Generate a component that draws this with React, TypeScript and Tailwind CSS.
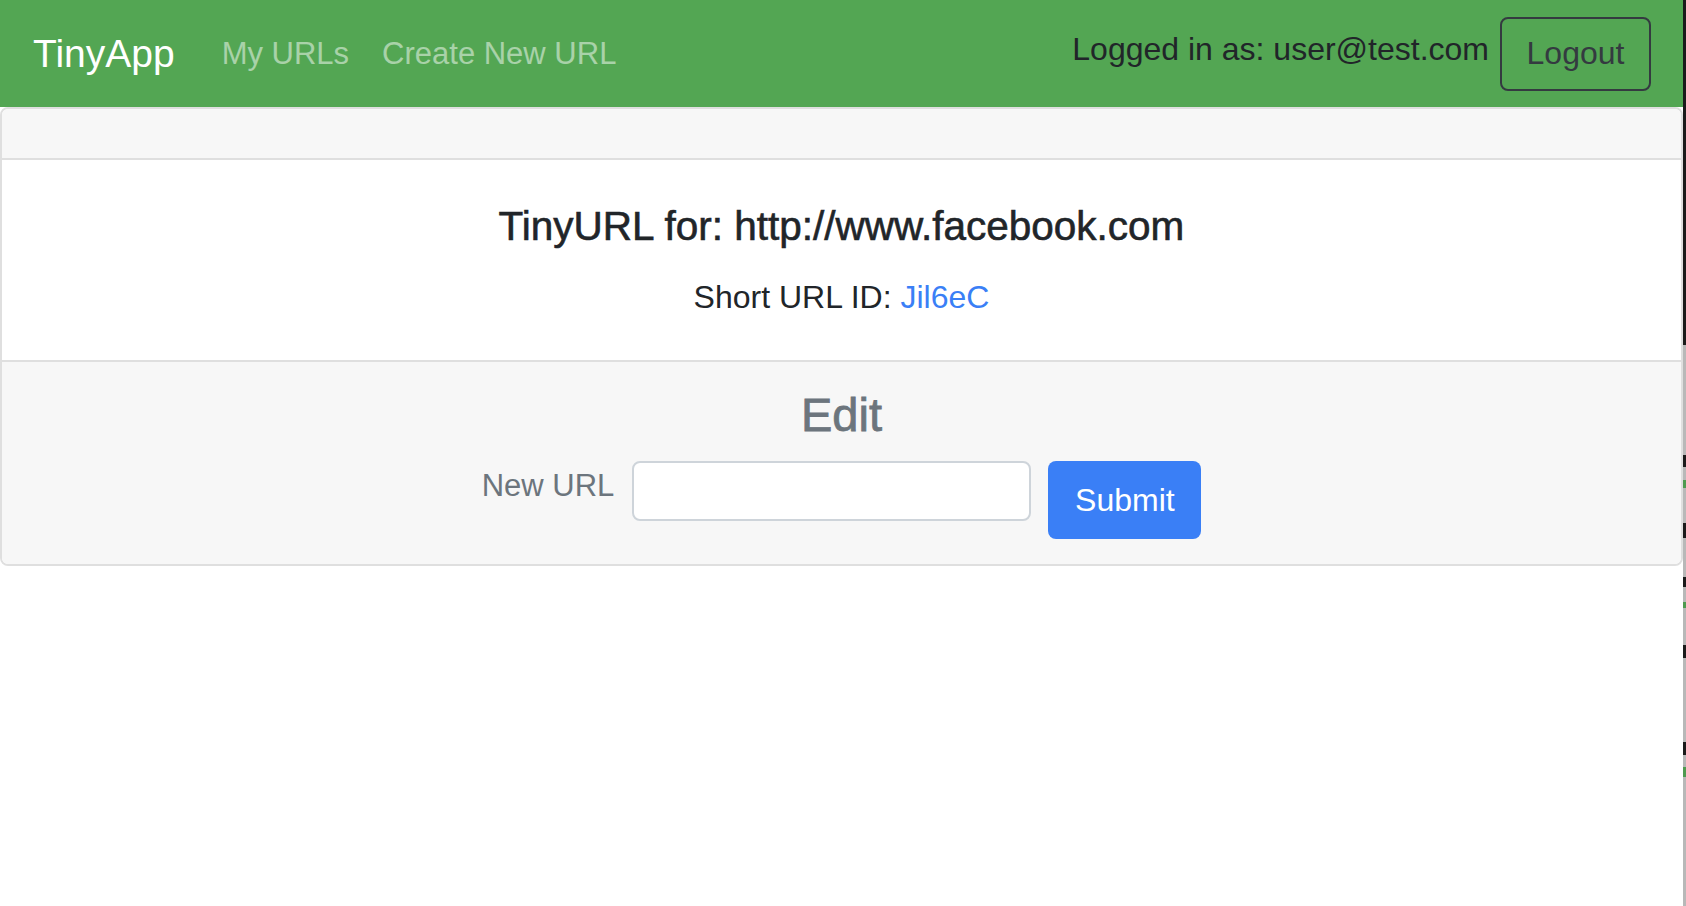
import React from 'react'

const navLinks = [
  { label: 'My URLs', href: '/urls', className: '' },
  { label: 'Create New URL', href: '/urls/new', className: 'ml-[33px]' },
]

// the dark window edge on the right of the screenshot
const edgeBits = [
  'h-[345px] bg-[#1b1b1b]',
  'h-[110px] bg-[#b8b8b8]',
  'h-[12px] bg-[#1b1b1b]',
  'h-[13px] bg-[#b8b8b8]',
  'h-[8px] bg-[#4f9a4f]',
  'h-[35px] bg-[#b8b8b8]',
  'h-[15px] bg-[#1b1b1b]',
  'h-[39px] bg-[#b8b8b8]',
  'h-[10px] bg-[#1b1b1b]',
  'h-[15px] bg-[#b8b8b8]',
  'h-[6px] bg-[#4f9a4f]',
  'h-[37px] bg-[#b8b8b8]',
  'h-[13px] bg-[#1b1b1b]',
  'h-[84px] bg-[#b8b8b8]',
  'h-[13px] bg-[#1b1b1b]',
  'h-[12px] bg-[#b8b8b8]',
  'h-[10px] bg-[#4f9a4f]',
  'flex-1 bg-[#b8b8b8]',
]

function Navbar() {
  return (
    <nav className="flex h-[107px] items-center justify-between bg-[#53a653] pl-[33px] pr-[32px]">
      <div className="flex items-center">
        <a href="/" className="mr-[47px] text-[39px] leading-[48px] text-white">
          TinyApp
        </a>
        {navLinks.map((link) => (
          <a
            key={link.href}
            href={link.href}
            className={`text-[31px] leading-[46px] text-white/50 ${link.className}`}
          >
            {link.label}
          </a>
        ))}
      </div>
      <div className="flex items-center">
        <span className="mb-[10px] text-[32px] leading-[46px] text-[#212529]">
          Logged in as: user@test.com
        </span>
        <button className="ml-[11px] h-[74px] w-[151px] rounded-[8px] border-2 border-[#343a40] pb-[2px] text-[32px] text-[#343a40]">
          Logout
        </button>
      </div>
    </nav>
  )
}

export default function App() {
  return (
    <div className="flex min-h-screen bg-white font-['Liberation_Sans',Arial,sans-serif]">
      <div className="flex-1">
        <Navbar />

        <div className="overflow-hidden rounded-[8px] border-2 border-[#dfdfdf]">
          {/* Card header (empty) */}
          <div className="h-[51px] border-b-2 border-[#dfdfdf] bg-[#f7f7f7]" />

          {/* Card body */}
          <div className="bg-white pt-[42px] pb-[40px] text-center">
            <h5 className="text-[40.5px] leading-[48px] text-[#212529] [-webkit-text-stroke:0.6px]">
              TinyURL for: http://www.facebook.com
            </h5>
            <p className="mt-[24px] text-[32px] leading-[46px] text-[#212529]">
              Short URL ID: <a href="/u/Jil6eC" className="text-[#3a7ff6]">Jil6eC</a>
            </p>
          </div>

          {/* Card footer */}
          <div className="border-t-2 border-[#dfdfdf] bg-[#f7f7f7] pt-[25px] pb-[25px]">
            <h4 className="text-center text-[47px] leading-[56px] text-[#6c757d] [-webkit-text-stroke:0.8px]">
              Edit
            </h4>
            <form className="mt-[18px] flex items-start justify-center" onSubmit={(e) => e.preventDefault()}>
              <label htmlFor="longURL" className="mt-[2px] text-[31px] leading-[46px] text-[#6c757d]">
                New URL
              </label>
              <input
                id="longURL"
                type="text"
                className="ml-[18px] h-[60px] w-[399px] rounded-[8px] border-2 border-[#ced4da] bg-white px-[24px] text-[31px] outline-none"
              />
              <button
                type="submit"
                className="ml-[17px] h-[78px] w-[153px] rounded-[8px] bg-[#3a7ff6] text-[32px] text-white"
              >
                Submit
              </button>
            </form>
          </div>
        </div>
      </div>

      <div className="flex w-[3px] flex-col">
        {edgeBits.map((cls, i) => (
          <div key={i} className={cls} />
        ))}
      </div>
    </div>
  )
}
